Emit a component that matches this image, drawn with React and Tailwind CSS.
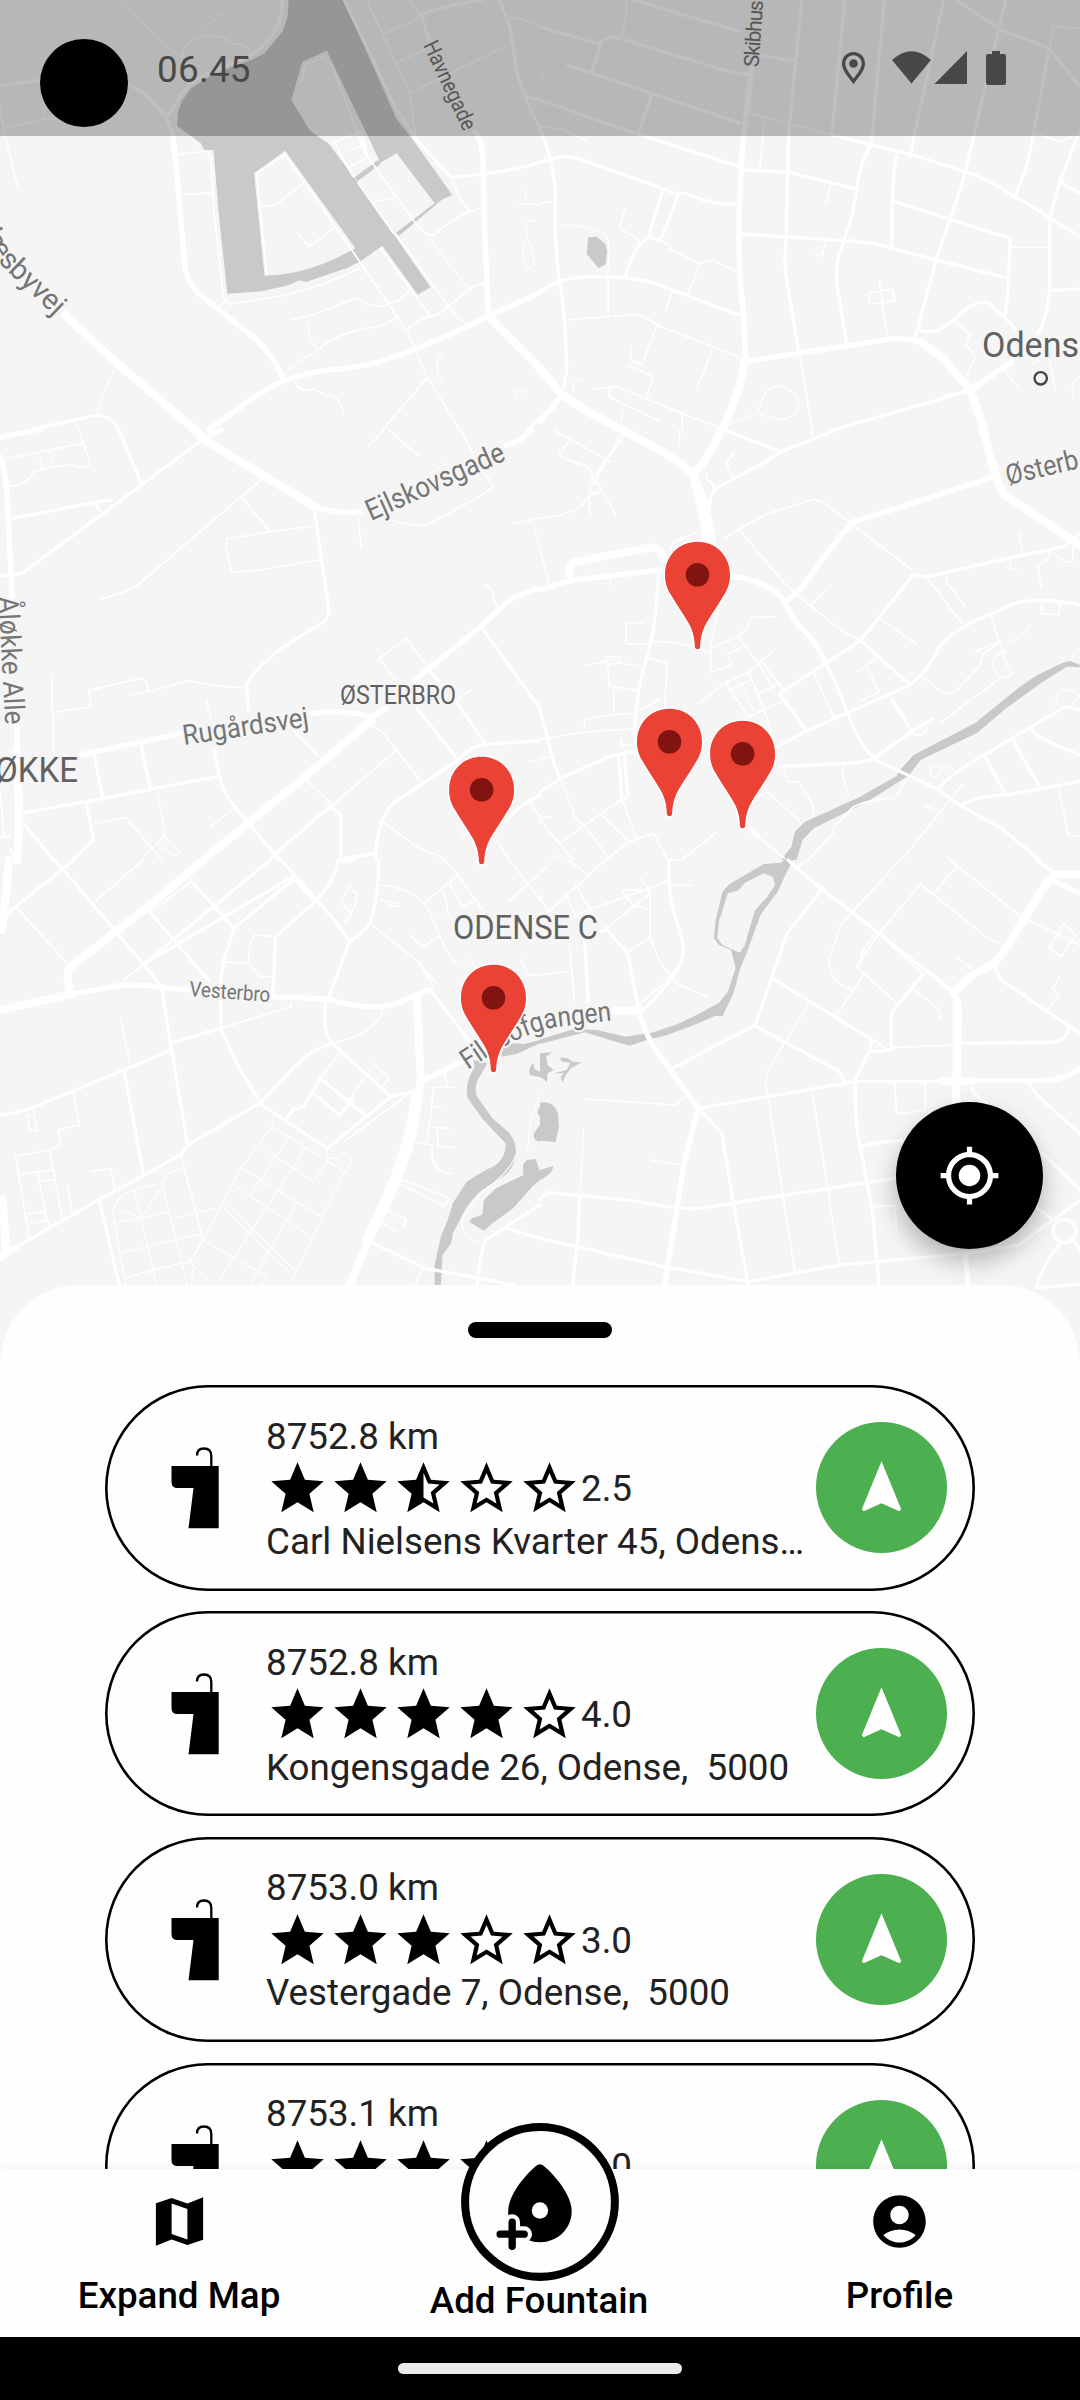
import React from "react";

/* Every map tile is drawn in its own 1568x1290 unit space and scaled to 540x430. */
const TILES = [
  {
    at: "translate(0 0) scale(0.34439 0.33333)",
    water: [
      "M838 0L835 50L820 95L768 160L735 178L650 210L600 235L555 265L530 300L517 335L514 378L583 430L593 450H620L635 640L660 881L750 875L830 858L870 841L890 845L1010 803L1048 783L1110 737L1213 884L1250 862L1142 700L1030 535L955 432L900 392L846 300L878 185L949 152L1100 478L1098 492L1152 460L1262 610L1313 585L1210 435L1150 355L1065 155L995 0Z M828 452L738 520L768 827Q850 825 920 798Q970 780 1032 745Z",
      "M1030 532L1098 480L1105 492L1038 544Z",
      "M1150 698L1262 610L1285 598L1158 708Z",
    ],
    xl: "M190 945L230 985L340 1090L590 1310M1420 950L1568 1105",
    l: "M605 1290L700 1220Q780 1155 860 1130Q920 1112 1000 1105Q1080 1100 1210 1045Q1320 1000 1415 950L1568 878M1380 395Q1402 430 1402 480L1408 700L1418 945M822 1135Q790 1060 740 1015L635 928L575 880Q540 840 537 800L512 500L502 410",
    m: "M502 410Q495 360 460 325Q420 275 375 255M0 258L120 240M480 350Q510 320 525 285Q560 235 640 205L730 165Q800 115 815 50L820 0M1215 45Q1300 15 1400 0M1225 50L1245 120M1000 0L1150 325L1210 420L1310 532L1405 522Q1500 510 1568 487M1450 0L1480 80L1500 210Q1515 280 1568 385M0 1310L280 1245Q330 1250 345 1290M1568 1255L1530 1290M1530 290L1568 300",
    s: "M510 465L600 453Q612 462 613 490L622 640L648 880Q650 905 672 912L820 887Q950 855 1045 805M635 925L655 902M525 585L615 577M745 520L828 465L1020 748L1150 945L1185 1000L1240 1130L1335 1290M1240 1135L1110 1290M745 520L775 825M762 618L800 615L880 550M865 702L898 740L968 685M1150 705L1325 950M1105 745L1250 948M1040 550L1142 700M1048 395L1068 470L1200 660Q1230 710 1260 705Q1330 640 1400 623M970 425L1048 395M970 425L1025 530M1015 500L1070 470M1020 450L1062 435M1088 605L1145 592M1310 535L1335 595L1362 632M845 960L910 943L1040 893Q1060 920 1110 918L1160 900L1190 870M920 1050Q980 1000 1060 985Q1120 980 1155 950M1185 985Q1220 950 1270 945L1380 855L1405 852M1065 0L1190 280L1208 420M1110 105L1215 55M1145 190L1235 150M1190 280L1485 130M1480 55H1510L1568 78M530 170Q530 120 600 108Q640 100 670 130Q720 130 730 160M10 385L130 358L165 357M10 385L0 320M10 385L53 568M855 1145Q870 1180 910 1168L950 1188Q980 1180 998 1240M1190 0L1220 45M875 250L885 195L940 172L965 200L1065 470M220 1270L230 1290",
    t: "M280 1245Q300 1165 340 1095M355 0L470 130L525 170M588 105Q585 80 655 35M125 300L132 360M830 1120Q850 1090 920 1052M892 955Q895 1020 920 1045M1245 712L1360 865M1325 950L1350 970M1285 1150Q1250 1095 1288 1058M1530 1180Q1515 1160 1498 1175Q1490 1190 1505 1198M1527 568V610M1505 613H1568M1560 660L1530 665Q1520 690 1545 750Q1560 800 1535 806Q1512 800 1522 730",
  },
  {
    at: "translate(540 0) scale(0.34439 0.33333)",
    water: ["M140 712L165 710L190 733L195 755L190 793L170 804L136 762Z"],
    xl: "M0 1105L65 1185Q140 1240 270 1305M1105 1025L1170 1075L1250 1170L1290 1290M592 1085Q590 1150 530 1290",
    l: "M615 205L588 440L578 640Q575 800 590 930L598 1085L750 1060L1000 1020Q1090 1005 1130 1045Q1200 1100 1250 1170M65 1185L0 1265M1250 1170L1370 1085",
    m: "M0 80L170 132Q190 105 230 115L550 215L605 225M150 215L178 130M80 195L580 370M270 0L585 95M640 165L740 183M325 285L285 400M0 300L220 380L580 500M0 487L60 470Q90 465 150 490L400 583Q420 575 440 587Q500 615 575 613M0 385Q45 500 45 600Q40 700 55 830Q75 950 78 1110L70 1160M0 875Q60 830 150 830Q300 830 360 860L575 945M355 575L315 710L285 740Q270 760 248 830M400 590L350 722L315 712M760 0L722 400L715 700Q708 790 715 830L752 1060M885 0L848 400M1000 0L965 400L958 440Q925 500 920 570L905 650L870 760Q855 810 865 870L890 1030M590 510L720 517L920 567M590 702L885 722Q960 725 1010 742L1350 833M850 405L1100 470L1235 515Q1310 540 1370 585Q1450 630 1480 655L1568 710M1172 0L1090 390L1075 470M1352 0L1235 515L1215 585L1150 780L1090 1010M1035 468Q1020 540 1022 740M1030 605L1365 715L1358 890L1350 945M1210 0L1340 90L1478 145L1568 260M1478 150L1430 420L1410 510L1380 585M1568 390L1510 545L1480 655V860Q1475 950 1445 1000M1480 872L1568 867M1510 545L1568 580M1100 990Q1150 1010 1200 960Q1260 900 1300 907Q1340 940 1380 985M850 1290L1170 1195L1250 1170M1175 1190L1270 1165",
    s: "M610 340L850 405M652 355L638 505M845 550L830 608M0 610L45 603M248 625L230 685L275 710L290 725M350 722L375 735L380 750L465 790L430 880M465 790L500 780L575 815M385 875L365 928M828 725L820 767H795M198 830V950M78 960L280 943Q310 950 340 975L600 1080M340 975L295 1095L265 1080L262 1035M500 1050L455 1170M258 1097L328 1130L310 1190M158 1167L225 1160L410 1240L530 1285M205 1165L198 1190L345 1262M412 1240V1290M755 1070L790 1290M985 838L1008 1008M955 878L1023 867L1030 903L957 912ZM1345 1105L1390 1165M1370 742H1475M250 0Q255 60 235 110M1200 960L1248 1005L1235 1030L1265 1070L1240 1130M1480 1085L1497 1170M1490 80L1568 85M1490 80L1478 150M1440 400L1510 425L1568 400M0 378L60 388L135 420M1500 0",
    t: "M50 675Q170 675 195 710Q205 750 195 830M632 1240Q650 1160 690 1157Q750 1170 752 1215Q740 1260 690 1258Q650 1250 632 1240L560 1267L550 1245M130 1138L98 1150L95 1180M240 1235L235 1265M1568 1130Q1535 1150 1548 1190M0 250L14 210M1430 1095L1450 1080",
  },
  {
    at: "translate(0 430) scale(0.34439 0.33333)",
    xl: "M555 -10L590 28L915 230M590 1290L880 1045L1080 870M50 1290Q55 1200 55 1120L52 1065L48 960",
    l: "M915 230Q980 255 1045 245M1470 45Q1510 35 1545 0M0 80Q22 150 22 220L35 500M235 975L525 910M905 850Q1030 840 1075 862L1120 835M1205 750L1395 590L1480 510Q1510 490 1568 475M50 890V960M590 28L640 0",
    m: "M590 28L70 425Q40 445 0 435M0 25L120 0M345 0L408 155M35 265L275 217L290 243M275 217L320 210M912 235L955 540Q955 560 940 575Q870 620 800 668Q730 730 715 765L722 840M1400 595L1568 835M1210 835L1330 990M1330 990L1140 1120Q1090 1180 1092 1290M1330 990Q1370 945 1410 943L1568 932M1250 725L1275 755M1325 815L1405 935M65 1150L300 1105L640 1038M275 980L298 1105M410 945L437 1080M622 960L640 1050Q650 1100 715 1170L810 1290M250 1115L272 1230L210 1290M990 1290V1155L960 1128L790 1280M68 1180L155 1290M1000 1285L1092 1270M1568 1095Q1500 1130 1470 1175M48 1290L30 1260",
    s: "M760 148L700 200L400 465Q370 485 295 507M700 200L785 305L910 288M785 305L660 327L655 345L672 425Q750 425 810 410L925 390M1038 260L1050 355M1135 270Q1180 285 1235 287L1330 235Q1440 175 1430 165L1405 125M15 87L240 40M230 0L262 100Q255 115 225 110Q210 95 95 125Q90 160 30 170M1070 50L1115 0M1130 0L1215 78M1340 0L1370 65M1485 282L1568 265M1405 462Q1430 470 1433 505L1445 530M1150 752L1100 685L1180 625L1250 722M1325 810L1370 780M153 848L265 830L257 782Q340 760 410 745Q425 745 430 780M150 735L155 965M380 795L450 780L550 752Q620 770 710 773M600 810L612 865M855 905L925 980M685 1130L612 1190M885 1045L965 1125L1150 962M1055 875L1110 905L1220 1050M275 1180L365 1163L470 1290M1105 1170L1210 1250L1290 1285M0 1220H30M0 1080L12 1220M1440 1225L1478 1290M1535 1110L1568 1160",
    t: "M112 68L122 115M145 60L153 108M458 1085L480 1215L410 1290M475 1215L525 1265L505 1280L455 1240M1250 130L1300 95M1548 275L1568 360M1530 995L1568 990M1340 1228L1360 1205",
  },
  {
    at: "translate(540 430) scale(0.34439 0.33333)",
    water: [
      "M1568 705L1540 693L1515 700L1440 737L1385 777L1265 878L1085 975L1050 1015L1035 1038L930 1100L770 1175L740 1205L730 1250L700 1290L745 1290L762 1230L795 1195L950 1115L1070 1037L1105 990L1270 908L1350 838L1460 755L1530 710L1568 712Z",
    ],
    xl: "M220 -10L330 50Q400 90 440 130Q480 200 500 340M440 130Q480 110 525 0M90 440Q75 400 105 395L320 352Q345 350 360 385M1285 0L1320 120Q1330 170 1350 195L1568 345",
    l: "M440 130Q465 230 485 345M0 478L100 450L350 420M90 440L100 450M560 440Q650 450 700 500Q740 580 775 610M775 610Q810 650 830 700M1320 140L905 278Q830 370 755 480L720 510",
    m: "M535 0L700 65L860 0M700 65L655 95L510 175Q490 200 492 240M1125 440L1380 380L1520 350L1568 310M1125 440L1085 433L930 632L695 790M930 632L1075 765M1568 525Q1400 490 1330 545Q1220 580 1160 650Q1130 720 1075 765L770 905L690 950M830 700Q860 760 895 855Q930 950 975 990L1150 1075L1225 1130L1340 1195L1450 1290M695 1010L880 1000Q940 1000 970 985M345 435L335 550Q325 640 305 700Q275 800 275 940M0 1085L60 1045L205 978L270 965M228 980L238 1105M245 980L255 1100L235 1110M0 840L40 1000L60 1045M1225 1125Q1260 1100 1350 1095L1568 1055M1160 1075Q1180 1040 1290 975L1525 830L1568 840M1290 975L1350 1090M1370 925L1450 1070M1425 895Q1440 925 1568 975M695 790L775 905M1020 805L1080 905M970 985L1080 905L1140 865",
    s: "M0 265Q110 250 125 220L150 190M160 155L235 10M150 150L250 10M205 95L40 0M85 35L55 70Q80 95 130 105Q150 115 155 150M175 175L220 255M140 200L147 260M405 0V45M535 325L650 255L795 208L820 215L1080 420M580 300L705 455L740 490L880 605L930 632M785 530L828 480M1125 445L1225 580M1180 440L1180 455L1235 530M990 568L1092 642M1310 555L1350 690L1370 730Q1365 745 1335 740Q1310 715 1315 690Q1325 675 1350 665M1390 310L1403 370M1362 385L1368 415L1388 415M1480 370Q1480 395 1445 405L1455 470M1490 370L1525 395L1545 395L1550 345M1458 520L1455 550L1507 555L1510 525M1110 740L1170 790L1205 787L1275 710L1285 675L1340 630L1262 665M1335 745L1160 880M790 0V15M0 355L25 460M565 65L542 100L560 140M485 130V145L505 170M380 355L388 335L450 310M250 640V578H305M252 642H315M322 635Q400 630 495 668M315 685L370 700L362 830M135 705L190 695M190 680H232V698L195 705ZM235 700L290 708M198 710L200 768L280 782M215 780L214 845M128 900L130 870Q190 850 280 850M345 810L290 840M0 930Q130 900 270 897M235 930L238 945H270M525 500L495 650L497 728L555 705L545 672L590 650M495 655L575 620L605 590L612 562L685 560M575 620L630 695L675 770M465 818L535 760L605 725L678 662M540 760L605 860M605 725L655 850L675 920M640 690L715 790M550 780L610 750M605 860L715 810M635 790L700 760M795 730L855 865M950 715L985 785L925 815M920 727L980 680M880 1005V1040L895 1095M708 1015L720 1055H750L790 1120L795 1150M625 1105L660 1085L755 1175M590 1185L710 1285M610 1195Q645 1215 635 1225Q620 1220 605 1195M0 1165L35 1160M0 1170L95 1290M60 1040L100 1160L140 1200L200 1285M55 1240L240 1105M180 1155L260 1235L330 1210L370 1290M260 1235L190 1290M240 1110L280 1225M515 1205L410 1290M1065 1050L1030 1105Q960 1105 910 1130L850 1195V1210L780 1290M1225 1065L1050 1290M1120 1127L1155 1145M1505 1075L1535 1215L1568 1220M0 985L40 980M1080 905Q1100 930 1125 900L1115 885",
    t: "M1425 580Q1410 625 1345 640M585 765L625 850M185 460L205 465V445M1505 825Q1485 790 1520 780Q1570 785 1565 800L1545 825M30 1290L55 1270M160 1025M1180 1280L1190 1290M1540 690L1568 655M1140 1010Q1160 1000 1160 1030Q1150 1050 1135 1035Q1130 1020 1140 1010M1160 1020L1190 1005L1200 1020",
  },
  {
    at: "translate(0 860) scale(0.34439 0.33333)",
    water: [
      "M1375 600L1415 610L1390 655Q1375 680 1385 710L1430 775L1480 820Q1500 850 1498 885Q1490 930 1460 950L1400 990Q1365 1020 1345 1060L1315 1120L1310 1150L1285 1185L1280 1276H1262L1262 1215L1280 1130L1300 1080L1315 1030L1355 965Q1400 935 1440 915Q1470 890 1468 850L1440 820L1400 775L1358 715Q1350 680 1368 640L1378 622Z",
      "M1455 590L1462 565L1490 550L1520 552L1568 540V550L1500 582Z",
      "M1530 900L1555 897L1568 935V960L1545 980L1490 1045L1430 1090L1405 1112L1362 1085L1370 1075L1400 1065L1405 1020L1440 985L1520 945L1518 915Z",
      "M1548 608Q1530 630 1540 645L1568 652V635L1552 628Z",
      "M1568 740Q1555 755 1568 770Z M1568 795L1550 820Q1545 840 1568 846Z",
    ],
    xl: "M590 0L430 140L200 325L195 350L203 400M1210 410L1222 660Q1210 760 1195 830Q1160 970 1070 1140L1010 1290M0 450L205 403M25 0Q20 100 5 210M8 1020L18 1180",
    l: "M203 403L345 377Q400 370 470 383L545 390M795 410L950 417Q1040 445 1110 440Q1150 435 1240 390M1222 665L1340 605M18 1175L0 1195M1225 660L1200 720Q1180 860 1130 980L1060 1140M18 1175L45 1165",
    m: "M0 765Q50 760 100 740L360 630L495 570M500 548L640 505M40 1165L285 1020L420 945L530 880L545 855L760 725L850 625Q900 570 965 550M545 855L495 550L470 390L455 360L160 0M360 630L417 945M288 1020L350 1290M15 165L215 0M420 310L850 50M430 150L605 360M560 70L680 205L650 300L640 365M420 310L785 0M680 205L860 50L980 190L1015 245L955 410M860 50L815 0M850 50L915 125L800 230L792 405M915 125Q980 50 980 0M1100 0Q1100 110 1075 190Q1045 225 1015 245M945 420Q935 520 965 550L1135 710M640 425L642 510L690 615L760 735L950 865L1135 710L1220 690M905 695L985 765L1020 725M830 780L850 750L880 740L905 700L930 655L1065 770M1250 390L1360 540M1085 1150L1235 1225L1500 1276M1568 1035L1410 1140Q1390 1200 1385 1276M1470 1105L1568 1135M980 5L1030 0",
    s: "M50 145L195 310M270 130L415 0M360 360L420 310M440 155L555 65L545 40M640 505L845 440V425M1110 455Q1090 520 965 550M955 410M930 655L985 580M1020 725Q1025 690 1055 660M1000 845L1200 690M1105 75Q1200 85 1240 140L1290 260L1325 315M1105 120L1155 130L1158 140L1130 135M1075 190L1220 310L1255 375M1190 225L1228 260L1275 228M1215 310L1270 370M650 305L720 310Q750 340 755 350H790M720 310L725 260L740 225L800 230M350 475L378 612M212 695L232 795L170 808L175 855L145 870L45 888L85 1135M145 870L180 1075M80 765L100 768L108 813H85ZM98 745L100 765M55 943L155 930M110 940L135 1080L150 1100M115 963L160 958M83 1060L130 1055M88 1090L130 1083M195 975L210 1060M265 935L322 925L333 985M525 885L590 1140L550 1205L465 1225L365 1253M1085 610L1130 655L1110 680M1290 640L1300 680M1240 850L1260 682H1320M1255 742H1280M1250 803L1305 805M1270 810L1272 860L1320 863M1215 848L1255 855V900Q1275 940 1310 940M1170 960L1305 1015L1290 1038L1165 975M1130 1055L1180 1080L1170 1105M1110 1090L1150 1112M1225 1230L1205 1276M1285 95L1298 130L1300 160L1320 185M1305 70L1345 140L1375 125M1290 0L1330 45L1400 150M1230 130L1330 45M1475 125L1568 40M1480 0L1568 120M1510 295L1535 345H1568M1020 70L990 125L1020 160L1000 185M1020 90L1037 100Q1035 130 1020 160",
    t: "M530 925L490 940L470 970L390 990Q330 1010 328 1060L365 1276M330 1090L495 1055M345 1180L590 1120M390 990L455 1276M470 970L545 1276M330 1040L410 1075L475 970M505 1075L625 1045M795 770L790 800L700 925L590 1140M790 800L1003 937M755 860L910 965L950 900L1000 937L840 1276M840 830L725 1010M885 865L780 1035M705 925L865 1030L935 1070M685 980L905 1130M655 1030L855 1230M650 1045L845 1240M860 1030L725 1276M780 1035L630 1270M590 1140L775 1250L760 1276M550 1205L625 1276M560 1225L555 1276M950 865V890Q975 905 1000 880Q1020 880 1022 900L1003 937M1568 700Q1530 800 1535 850L1530 880M1500 880Q1480 940 1400 995L1345 1070Q1330 1130 1385 1145M1360 290L1380 320",
  },
  {
    at: "translate(540 860) scale(0.34439 0.33333)",
    water: [
      "M650 12L700 8L718 -10L738 -8L710 50L690 95L640 165L605 265L580 330L562 400L530 468H508L460 490L370 525L310 540L260 557L220 545L130 517L0 552V538L100 507L165 510L250 530L330 517L400 492L460 462L520 428L545 395L568 325L555 270L520 255L505 235L510 180L530 95L550 72ZM650 40L595 68L575 92L545 100L528 160L520 180L515 235L530 255L580 278L595 255L610 200L625 150L660 110L683 75L675 50Z",
      "M0 580L35 577L18 590L22 615L40 630L22 640L20 665L0 650Z",
      "M60 592L80 595L95 605L120 607L90 625L75 645L65 668L60 650L70 640H40L78 630L88 608L60 603Z",
      "M0 728Q40 720 52 760L55 800L45 846L0 842Z",
      "M38 918L0 930V960Q40 940 38 918Z",
    ],
    xl: "M1568 42H1500Q1470 70 1450 100L1380 220Q1330 310 1300 320L1255 345L1200 400M1255 662H1170M1210 420V660L1208 725M215 452H285",
    l: "M285 440Q300 520 350 590L460 745L420 900L360 1290M1200 400L1218 450L1212 700M1160 662L1470 662Q1530 655 1568 625M1495 65L1568 100M1235 1180L1243 1280",
    m: "M720 0L820 90L910 160L1210 405M820 85L718 220L625 495L385 625M675 355L965 540L955 575L915 660M960 572Q1000 580 1030 562M1110 345L1020 460V562M625 498L870 635L885 665M460 745L915 665H1160M460 745L528 820L560 1020L605 1276M0 1020Q10 1000 30 998L270 1022Q400 1050 460 1045L1030 955M0 1135L360 1220L605 1265L870 1215L1240 1180M915 665Q915 800 930 860L965 1050L985 1276M115 1010L110 1130L95 1276M180 215L190 205L255 280L285 440M130 245L140 425M1225 550L1490 547Q1530 540 1538 500L1340 360L1320 320M1568 520L1538 500M1420 670Q1420 690 1568 820M1460 880L1568 990M1568 1020L1490 1080L1390 1155L1240 1180M1440 1040L1490 1080M1255 685Q1260 710 1300 730M1510 1150Q1450 1230 1443 1280M1550 1145L1568 1170M930 860Q1000 840 1050 842M1440 0L1495 40M375 0Q370 100 390 160Q420 250 415 290Q400 350 300 450",
    s: "M905 160L1200 390M1115 345L930 170M780 430L710 550L660 635L655 660L740 1240M790 690L870 1215M1190 0L1390 165L1568 255M1210 20L1148 95M1045 0L930 130L870 200Q850 270 838 300Q840 370 905 390M1105 72L1300 235L1335 250M1105 72L985 220L920 320L1035 430M970 225L930 285L940 290M940 345L860 465M1080 385L1155 445Q1165 455 1160 475M1030 562L1215 555M970 540L1010 570M1520 190L1555 225L1515 290L1478 265ZM1210 290L1250 325M1508 350L1490 385L1507 405L1475 450M1030 670L1035 760H1075M1118 670V750L1085 755M132 717L395 735L420 710M322 900L410 915M965 1040L1030 1037L1035 1110M375 0L405 0M385 75H440M250 280L320 230M180 215L320 100M320 90L235 90L270 135L320 150V230L345 300L395 370L485 410M415 285Q400 345 290 430M290 55L320 90V150M100 165L370 65M25 155L190 0M100 70L155 165M75 100L105 170M0 345L85 333M85 250L100 425M0 35L20 20M80 0L135 40M0 110L20 150M750 20L775 0",
    t: "M128 800L115 1010M1530 0",
  },
];

function MapCanvas() {
  const v = { vectorEffect: "non-scaling-stroke" };
  return (
    <svg width="1080" height="1375" viewBox="0 0 1080 1375" className="block" fontFamily="Roboto, sans-serif">
      <rect width="1080" height="1375" fill="#f5f5f5" />
      {TILES.map((t) => (
        <g key={t.at} transform={t.at} fill="#c9c9c9" fillRule="evenodd">
          {(t.water || []).map((d) => (
            <path key={d} d={d} />
          ))}
        </g>
      ))}
      {TILES.map((t) => (
        <g key={t.at} transform={t.at} fill="none" stroke="#fff" strokeLinejoin="round" strokeLinecap="round">
          <path d={t.t} strokeWidth="1.1" style={v} />
          <path d={t.s} strokeWidth="1.7" style={v} />
          <path d={t.m} strokeWidth="3.2" style={v} />
          <path d={t.l} strokeWidth="5.4" style={v} />
          <path d={t.xl} strokeWidth="8" style={v} />
        </g>
      ))}
      <g fill="none" stroke="#fff">
        <circle cx="595" cy="488.5" r="5.5" strokeWidth="1.8" fill="#f5f5f5" />
        <circle cx="1064.5" cy="1231" r="11.5" strokeWidth="3.5" fill="#f5f5f5" />
        <path d="M1034 1288L1080 1284" strokeWidth="3" />
        <circle cx="350" cy="1101.5" r="3.5" strokeWidth="2.5" />
      </g>
      <g fill="#757575" stroke="#f5f5f5" strokeWidth="4" strokeLinejoin="round" style={{ paintOrder: "stroke" }}>
        <path id="gangen" d="M468 1070L486 1058Q520 1034 556 1027L616 1020" fill="none" stroke="none" />
        <path id="naesby" d="M-23 220Q-12 252 8 272L66 327" fill="none" stroke="none" />
        <text fontSize="29" textLength="126">
          <textPath href="#naesby">Næsbyvej</textPath>
        </text>
        <text fontSize="22" stroke="none" textLength="96" lengthAdjust="spacingAndGlyphs" transform="translate(423 45) rotate(65)">Havnegade</text>
        <text fontSize="21" stroke="none" textLength="67" transform="translate(758.5 67.5) rotate(-86)">Skibhus</text>
        <text fontSize="29" textLength="149" lengthAdjust="spacingAndGlyphs" transform="translate(371 521) rotate(-24.3)">Ejlskovsgade</text>
        <text fontSize="28" textLength="127" lengthAdjust="spacingAndGlyphs" transform="translate(184 745) rotate(-8.5)">Rugårdsvej</text>
        <text fontSize="28" textLength="128" lengthAdjust="spacingAndGlyphs" transform="translate(-1.5 597) rotate(87)">Åløkke Alle</text>
        <text fontSize="21" textLength="81" lengthAdjust="spacingAndGlyphs" transform="translate(189 996) rotate(4.2)">Vesterbro</text>
        <text fontSize="28" textLength="74" lengthAdjust="spacingAndGlyphs" transform="translate(1008 485) rotate(-13.3)">Østerb</text>
        <text fontSize="28" textLength="155" lengthAdjust="spacingAndGlyphs">
          <textPath href="#gangen">Filosofgangen</textPath>
        </text>
        <g fill="#616161">
          <text x="982" y="356.7" fontSize="35" textLength="97" lengthAdjust="spacingAndGlyphs">Odens</text>
          <text x="340" y="704" fontSize="25" textLength="116" lengthAdjust="spacingAndGlyphs">ØSTERBRO</text>
          <text x="-5" y="781.5" fontSize="35" textLength="83" lengthAdjust="spacingAndGlyphs">ØKKE</text>
          <text x="453" y="939" fontSize="33" textLength="145" lengthAdjust="spacingAndGlyphs">ODENSE C</text>
        </g>
      </g>
      <circle cx="1040.7" cy="378.3" r="6.2" fill="#f5f5f5" stroke="#444" strokeWidth="2.4" />
      {[
        [697.5, 574.8],
        [669.5, 741.8],
        [742.6, 753.8],
        [481.6, 789.8],
        [493.5, 997.8],
      ].map(([x, y]) => (
        <g key={x} transform={`translate(${x} ${y})`}>
          <path
            d="M0 -33C-19 -33 -32.500 -18.500 -32.500 0C-32.500 8 -30.500 14 -26 21C-19 33 -12 42 -7 52C-3.5 60 -2.8 66 -2.6 72.500Q-2.4 74.500 0 74.500Q2.4 74.500 2.6 72.500C2.8 66 3.5 60 7 52C12 42 19 33 26 21C30.500 14 32.500 8 32.500 0C32.500 -18.500 19 -33 0 -33Z"
            fill="#ea4335"
            stroke="#fff"
            strokeWidth="3"
            style={{ paintOrder: "stroke" }}
          />
          <circle r="11.8" fill="#811411" />
        </g>
      ))}
    </svg>
  );
}

function StatusBar() {
  return (
    <div className="absolute inset-x-0 top-0 flex h-[136px] items-start bg-black/25 pl-10">
      <div className="mt-[39px] size-[88px] rounded-full bg-black" />
      <div className="mt-[48px] ml-[29px] text-[36.75px] leading-[43px] tracking-[0.3px] text-[#484848]">06.45</div>
      <svg className="absolute top-[48px] left-[838px]" width="172" height="40" viewBox="838 48 172 40" fill="#484848">
        <path
          d="M853.500 52C847 52 842 57 842 63.500C842 71 849 78 853.500 84C858 78 865 71 865 63.500C865 57 860 52 853.500 52ZM853.500 55.300C858.200 55.300 861.700 59 861.700 63.500C861.700 68.500 857 74 853.500 78.800C850 74 845.300 68.500 845.300 63.500C845.300 59 848.800 55.300 853.500 55.300Z"
          fillRule="evenodd"
        />
        <circle cx="853.500" cy="63.500" r="4.300" />
        <path d="M892 60Q911.500 42.500 931 60L911.500 83.500Z" />
        <path d="M967 51V84H934.500Z" />
        <path d="M992 51H1000V54H1004Q1006 54 1006 56V83Q1006 85 1004 85H988Q986 85 986 83V56Q986 54 988 54H992Z" />
      </svg>
    </div>
  );
}

const STAR = {
  full: "M12 17.27L18.18 21l-1.640-7.030L22 9.240l-7.190-.610L12 2 9.190 8.630 2 9.240l5.460 4.730L5.820 21z",
  half: "M22 9.240l-7.190-.620L12 2 9.190 8.630 2 9.240l5.460 4.730L5.820 21 12 17.270 18.180 21l-1.630-7.030L22 9.240zM12 15.400V6.100l1.710 4.040 4.380.380-3.320 2.880 1 4.280L12 15.400z",
  empty:
    "M22 9.240l-7.190-.620L12 2 9.190 8.630 2 9.240l5.460 4.730L5.820 21 12 17.270 18.180 21l-1.630-7.030L22 9.240zM12 15.400l-3.760 2.270 1-4.280-3.320-2.880 4.380-.380L12 6.100l1.710 4.040 4.380.380-3.320 2.880 1 4.280L12 15.400z",
};

const starKind = (rating, i) => (rating >= i + 1 ? "full" : rating > i ? "half" : "empty");

function FountainIcon() {
  return (
    <svg width="48" height="83" viewBox="0 0 48 83" className="mt-[61px] ml-[65.500px] shrink-0">
      <path d="M26 9.500Q26 2.500 33 2.500Q40.300 2.500 40.300 10V21" fill="none" stroke="#000" strokeWidth="2.300" />
      <path d="M0.500 20H47.700V82.300H17.500L22.500 42H6.500Q0.500 42 0.500 36Z" />
    </svg>
  );
}

function FountainCard({ distance, rating, address }) {
  return (
    <div className="flex h-[205.300px] w-[870px] shrink-0 rounded-full bg-[#fefefe] shadow-[inset_0_0_0_2.6px_#000]">
      <FountainIcon />
      <div className="mt-[29.500px] ml-[47.500px] w-[541px] shrink-0 text-[36.750px] leading-[43px] text-[#222]">
        <div>{distance}</div>
        <div className="flex h-[62px] items-center">
          {[0, 1, 2, 3, 4].map((i) => (
            <svg key={i} width="63" height="63" viewBox="0 0 24 24" className="shrink-0">
              <path d={STAR[starKind(rating, i)]} />
            </svg>
          ))}
          <span>{rating.toFixed(1)}</span>
        </div>
        <div className="whitespace-pre">{address}</div>
      </div>
      <div className="mt-[37px] ml-[8.500px] flex size-[131px] shrink-0 items-center justify-center rounded-full bg-[#4caf50]">
        <svg width="63" height="63" viewBox="0 0 24 24" fill="#fff">
          <path d="M12 2L4.500 20.290l.710.710L12 18l6.790 3 .710-.710z" />
        </svg>
      </div>
    </div>
  );
}

const FOUNTAINS = [
  { distance: "8752.8 km", rating: 2.5, address: "Carl Nielsens Kvarter 45, Odens…" },
  { distance: "8752.8 km", rating: 4, address: "Kongensgade 26, Odense,  5000" },
  { distance: "8753.0 km", rating: 3, address: "Vestergade 7, Odense,  5000" },
  { distance: "8753.1 km", rating: 4, address: "" },
];

function BottomNav() {
  return (
    <nav className="relative grid h-[168px] grid-cols-3 bg-[#fefefe] text-[36.750px] leading-[43px] font-medium text-black shadow-[0_-2px_10px_rgba(0,0,0,0.06)]">
      <div className="flex flex-col items-center pt-[21px] pr-[2px]">
        <svg width="63" height="63" viewBox="0 0 24 24">
          <path d="M15 5.100L9 3 3 5.020v16.200l6-2.330 6 2.100 6-2.020V2.770L15 5.100zm0 13.790l-6-2.110V5.110l6 2.110v11.670z" />
        </svg>
        <span className="mt-[21px]">Expand Map</span>
      </div>
      <div className="flex flex-col items-center">
        <div className="-mt-[46px] size-[158px] shrink-0">
          <svg width="158" height="158" viewBox="19 20.500 472.500 472.500">
            <circle cx="255.200" cy="256.700" r="224" fill="#fefefe" stroke="#000" strokeWidth="24" />
            <path d="M243 149Q255 139 267 149C300 178 350 235 350 285C350 335 308 377 255 377C203 377 160 335 160 285C160 235 210 178 243 149Z" />
            <circle cx="255" cy="282" r="24.500" fill="#fefefe" />
            <path d="M172 317V389M136 353H208" stroke="#fefefe" strokeWidth="47" strokeLinecap="round" />
            <path d="M172 317V389M136 353H208" stroke="#000" strokeWidth="22" strokeLinecap="round" />
          </svg>
        </div>
        <span className="-mt-[2px] mr-[2px] whitespace-nowrap">Add Fountain</span>
      </div>
      <div className="flex flex-col items-center pt-[21px] pr-[1px]">
        <svg width="63" height="63" viewBox="0 0 24 24">
          <path d="M12 2C6.480 2 2 6.480 2 12s4.480 10 10 10 10-4.480 10-10S17.520 2 12 2zm0 4c1.930 0 3.500 1.570 3.500 3.500S13.930 13 12 13s-3.500-1.570-3.500-3.500S10.070 6 12 6zm0 14c-2.030 0-4.430-.820-6.140-2.880C7.550 15.800 9.680 15 12 15s4.450.800 6.140 2.120C16.430 19.180 14.030 20 12 20z" />
        </svg>
        <span className="mt-[21px]">Profile</span>
      </div>
    </nav>
  );
}

export default function App() {
  return (
    <div className="relative flex h-[2400px] w-[1080px] flex-col overflow-hidden bg-[#f5f5f5] font-[Roboto,sans-serif]">
      <div className="relative h-[1285px] shrink-0">
        <MapCanvas />
        <StatusBar />
        <button className="absolute top-[1101.500px] left-[896px] flex size-[147px] items-center justify-center rounded-full bg-black shadow-[0_12px_24px_rgba(0,0,0,0.28)]">
          <svg width="63" height="63" viewBox="0 0 24 24" fill="#fff">
            <circle cx="12" cy="12" r="4.100" />
            <path d="M20.940 11A8.994 8.994 0 0 0 13 3.060V1h-2v2.060A8.994 8.994 0 0 0 3.060 11H1v2h2.060A8.994 8.994 0 0 0 11 20.940V23h2v-2.060A8.994 8.994 0 0 0 20.940 13H23v-2h-2.060zM12 19c-3.870 0-7-3.130-7-7s3.130-7 7-7 7 3.130 7 7-3.130 7-7 7z" />
          </svg>
        </button>
      </div>
      <main className="relative flex h-[884px] shrink-0 flex-col items-center overflow-hidden rounded-t-[79px] bg-[#fefefe]">
        <div className="mt-[37px] h-4 w-36 shrink-0 rounded-full bg-black" />
        <div className="mt-[47.300px] flex flex-col gap-[20.500px]">
          {FOUNTAINS.map((f, i) => (
            <FountainCard key={i} {...f} />
          ))}
        </div>
      </main>
      <BottomNav />
      <div className="flex h-[63px] shrink-0 justify-center bg-black pt-[26px]">
        <div className="h-[11px] w-[284px] rounded-full bg-[#ebebeb]" />
      </div>
    </div>
  );
}
